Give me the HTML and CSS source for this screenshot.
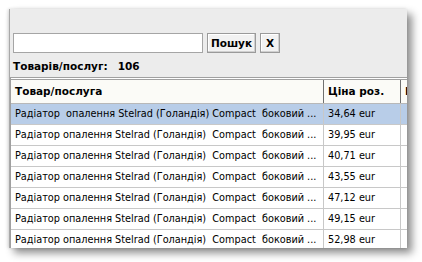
FILE: index.html
```html
<!DOCTYPE html>
<html>
<head>
<meta charset="utf-8">
<link rel="stylesheet" href="styles.css">
</head>
<body>
<div class="window">
  <div class="search">
    <input class="search-input" type="text">
    <button class="btn btn-search">Пошук</button>
    <button class="btn btn-clear">X</button>
  </div>
  <div class="count"><span>Товарів/послуг:</span><span class="num">106</span></div>
  <div class="grid">
    <div class="row head">
      <div class="c1">Товар/послуга</div>
      <div class="c2">Ціна роз.</div>
      <div class="c3">Ціна</div>
    </div>
    <div class="row sel">
      <div class="c1">Радіатор &nbsp;опалення Stelrad (Голандія) Compact &nbsp;боковий ...</div>
      <div class="c2">34,64 eur</div>
      <div class="c3"></div>
    </div>
    <div class="row">
      <div class="c1">Радіатор опалення Stelrad (Голандія) &nbsp;Compact &nbsp;боковий ...</div>
      <div class="c2">39,95 eur</div>
      <div class="c3"></div>
    </div>
    <div class="row">
      <div class="c1">Радіатор опалення Stelrad (Голандія) &nbsp;Compact &nbsp;боковий ...</div>
      <div class="c2">40,71 eur</div>
      <div class="c3"></div>
    </div>
    <div class="row">
      <div class="c1">Радіатор опалення Stelrad (Голандія) &nbsp;Compact &nbsp;боковий ...</div>
      <div class="c2">43,55 eur</div>
      <div class="c3"></div>
    </div>
    <div class="row">
      <div class="c1">Радіатор опалення Stelrad (Голандія) &nbsp;Compact &nbsp;боковий ...</div>
      <div class="c2">47,12 eur</div>
      <div class="c3"></div>
    </div>
    <div class="row">
      <div class="c1">Радіатор опалення Stelrad (Голандія) &nbsp;Compact &nbsp;боковий ...</div>
      <div class="c2">49,15 eur</div>
      <div class="c3"></div>
    </div>
    <div class="row">
      <div class="c1">Радіатор опалення Stelrad (Голандія) &nbsp;Compact &nbsp;боковий ...</div>
      <div class="c2">52,98 eur</div>
      <div class="c3"></div>
    </div>
  </div>
</div>
</body>
</html>
```
FILE: styles.css
```css
html, body {
  margin: 0;
  padding: 0;
  background: #ffffff;
  width: 422px;
  height: 262px;
  overflow: hidden;
  font-family: "DejaVu Sans Condensed", "DejaVu Sans", sans-serif;
  font-size: 10.8px;
  color: #000;
}
.window {
  margin: 9px 0 0 9px;
  width: 398px;
  height: 239px;
  background: #ececec;
  border-left: 1px solid #a8a8a8;
  box-shadow: 5px 5px 8px rgba(0,0,0,0.45), -1px 0 3px rgba(0,0,0,0.15);
  overflow: hidden;
  padding-top: 24px;
  box-sizing: border-box;
}
.search {
  display: flex;
  align-items: center;
  gap: 4px;
  padding-left: 3px;
  height: 20px;
}
.search-input {
  width: 190px;
  height: 20px;
  box-sizing: border-box;
  border: 1px solid #a5a5a5;
  background: #fff;
  margin: 0;
  padding: 0;
}
.btn {
  height: 20px;
  box-sizing: border-box;
  margin: 0;
  padding: 0;
  border: 1px solid #9a9a9a;
  background: #f2f2f2;
  box-shadow: inset -1px -1px 0 #d0d0d0, inset 1px 1px 0 #fff;
  font-family: "DejaVu Sans", sans-serif;
  font-size: 10.5px;
  font-weight: bold;
  color: #000;
}
.btn-search { width: 49px; }
.btn-clear { width: 20px; }
.count {
  display: flex;
  gap: 10px;
  padding-left: 3px;
  margin-top: 6px;
  height: 15px;
  line-height: 15px;
  font-family: "DejaVu Sans", sans-serif;
  font-size: 10.5px;
  font-weight: bold;
}
.grid {
  margin-top: 3px;
  border-top: 3px double #a0a0a0;
  border-left: 1px solid #a0a0a0;
  background: #fff;
  width: 430px;
}
.row {
  display: flex;
  height: 21px;
  line-height: 20px;
  border-bottom: 1px solid #c8c8c8;
  box-sizing: border-box;
}
.row > div {
  flex: none;
  padding-left: 4px;
  white-space: nowrap;
  overflow: hidden;
  box-sizing: border-box;
  border-right: 1px solid #c8c8c8;
}
.c1 { width: 313px; }
.c2 { width: 77px; }
.c3 { width: 40px; }
.head {
  background: #fbfbf7;
  font-family: "DejaVu Sans", sans-serif;
  font-size: 10.5px;
  font-weight: bold;
  height: 24px;
  line-height: 23px;
  border-bottom: 1px solid #b8b8b8;
}
.head > div { border-right: 1px solid #707070; }
.sel { background: #b8cde8; }
```
